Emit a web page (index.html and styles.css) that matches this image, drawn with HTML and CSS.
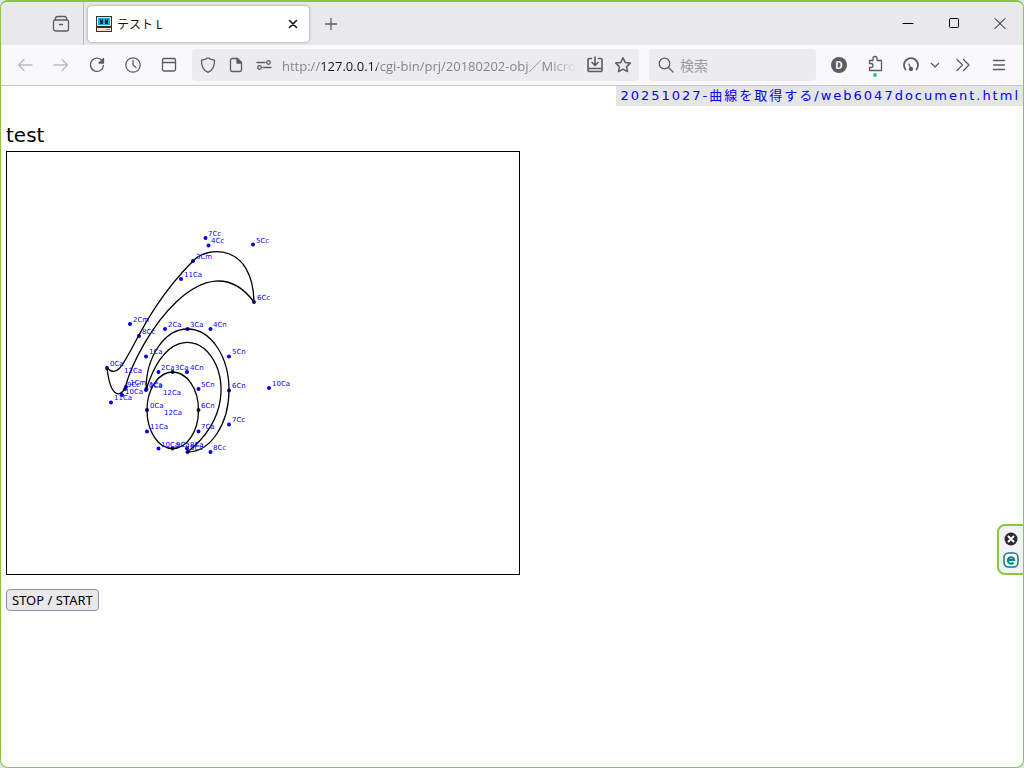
FILE: index.html
```html
<!DOCTYPE html>
<html lang="ja">
<head>
<meta charset="utf-8">
<title>テスト L</title>
<link rel="stylesheet" href="styles.css">
</head>
<body>
<div class="window">
  <header>
    <div class="tabbar">
      <button class="archive" aria-label="Recent browsing"><svg class="icon" viewBox="0 0 18 18"><path d="M3 5Q3.500 1.500 5.500 1.500h7Q14.500 1.500 15 5M3 5h12a1.500 1.500 0 0 1 1.500 1.500v7.500a2 2 0 0 1-2 2h-11a2 2 0 0 1-2-2V6.500A1.500 1.500 0 0 1 3 5zM7.500 9.500h3"/></svg></button>
      <div class="tab">
        <svg class="favicon" viewBox="0 0 16 16"><path fill="#3b3028" d="M0 0h16v16H0z"/><path fill="#f4dfd0" d="M1 1h14v9H1zM1 12h14v3H1z"/><path fill="#12aef0" d="M2 2h12v7H2z"/><path fill="#16253c" d="M4 3h3v5H4zM9 3h3v5H9z"/><path fill="#12aef0" d="M5 3h1v5H5zM10 3h1v5h-1z"/><path fill="#16253c" d="M5 4h1v4H5zM10 4h1v4h-1z"/><path fill="#a78f80" d="M10 13h4v1h-4z"/></svg>
        <span class="tab-title">テスト L</span>
        <button class="tab-close" aria-label="Close tab"><svg class="icon dark" viewBox="0 0 18 18"><path stroke-width="1.6" d="M5.500 5.500l7 7M12.500 5.500l-7 7"/></svg></button>
      </div>
      <button class="newtab" aria-label="New tab"><svg class="icon" viewBox="0 0 18 18"><path d="M9 3.500v11M3.500 9h11"/></svg></button>
      <div class="controls">
        <button aria-label="Minimize"><svg class="icon thin" viewBox="0 0 18 18"><path d="M4 8.500h10"/></svg></button>
        <button aria-label="Maximize"><svg class="icon thin" viewBox="0 0 18 18"><rect x="4.500" y="3.500" width="9" height="9" rx="1"/></svg></button>
        <button aria-label="Close window"><svg class="icon thin" viewBox="0 0 18 18"><path d="M4 3.500l10 10M14 3.500l-10 10"/></svg></button>
      </div>
    </div>
    <div class="toolbar">
      <button class="tool faded" aria-label="Back"><svg class="icon" viewBox="0 0 18 18"><path d="M16 9H2.500M8 3.500L2.500 9 8 14.500"/></svg></button>
      <button class="tool faded" aria-label="Forward"><svg class="icon" viewBox="0 0 18 18"><path d="M2 9h13.500M10 3.500L15.500 9 10 14.500"/></svg></button>
      <button class="tool" aria-label="Reload"><svg class="icon" viewBox="0 0 18 18"><path d="M14.500 5.200A6.600 6.600 0 1 0 15.500 9.500"/><path class="fill" d="M15.500 2.500v4.500H11z"/></svg></button>
      <button class="tool" aria-label="History"><svg class="icon" viewBox="0 0 18 18"><circle cx="9" cy="9" r="7.200"/><path d="M9 4.500V9l3 2.500"/></svg></button>
      <button class="tool" aria-label="Sidebar"><svg class="icon" viewBox="0 0 18 18"><rect x="2.500" y="2.500" width="13" height="12.500" rx="1.500"/><path d="M2.500 6.500h13"/></svg></button>
      <div class="field url">
        <button class="slot" aria-label="Tracking protection"><svg class="icon" viewBox="0 0 18 18"><path d="M9 1.800c2 1.600 4.300 2.200 6.500 2.300.3 5.500-1.500 10-6.500 12.300C4 14.100 2.200 9.600 2.500 4.100 4.700 4 7 3.400 9 1.800z"/></svg></button>
        <button class="slot" aria-label="Site information"><svg class="icon" viewBox="0 0 18 18"><path d="M5 2.500h5.500l4 4v7.500a1.500 1.500 0 0 1-1.500 1.500H5A1.500 1.500 0 0 1 3.500 14V4A1.500 1.500 0 0 1 5 2.500z"/><path class="fill" d="M10 2.500l4.500 4.500H10z"/></svg></button>
        <button class="slot" aria-label="Permissions"><svg class="icon" viewBox="0 0 18 18"><path d="M2 6.500h8M8 11.500h8"/><circle cx="13.500" cy="6.500" r="1.800"/><circle cx="4.500" cy="11.500" r="1.800"/></svg></button>
        <input class="address" type="text" aria-label="Address" value="http://127.0.0.1/cgi-bin/prj/20180202-obj／Microsoft">
        <button class="slot" aria-label="Save page"><svg class="icon" viewBox="0 0 18 18"><path stroke-width="1.600" d="M5.500 2.500h-2a1.500 1.500 0 0 0-1.500 1.500v10a1.500 1.500 0 0 0 1.500 1.500h11a1.500 1.500 0 0 0 1.500-1.500V4a1.500 1.500 0 0 0-1.500-1.500h-2M9 1v8M6 6.500l3 3 3-3M2 12.500h14"/></svg></button>
        <button class="slot" aria-label="Bookmark"><svg class="icon" viewBox="0 0 18 18"><path stroke-width="1.500" d="M9 1.800l2.200 4.600 5.100.7-3.700 3.500.9 5L9 13.200l-4.500 2.400.9-5L1.700 7.100l5.100-.7z"/></svg></button>
      </div>
      <div class="field search">
        <svg class="icon" viewBox="0 0 18 18"><circle cx="7.500" cy="7.500" r="5.300"/><path d="M11.500 11.500l4.500 4.500"/></svg>
        <input class="query" type="text" aria-label="検索" placeholder="検索">
      </div>
      <button class="tool account" aria-label="Account D"><span class="avatar">D</span></button>
      <button class="tool" aria-label="Extensions"><svg class="puzzle" viewBox="0 0 18 24"><path class="line" d="M3.500 7.500h3.500V5.500a2 2 0 0 1 4 0v2h4.500v10h-12v-3H5a2 2 0 0 0 0-4H3.500z"/><circle cx="9" cy="22" r="2" fill="#2ac3a2"/></svg></button>
      <button class="tool" aria-label="Performance"><svg class="icon" viewBox="0 0 18 18"><path stroke-width="1.800" d="M3.500 13.500a7 7 0 1 1 11 0"/><path d="M6.800 8L9 12.500"/><circle class="fill" cx="9" cy="13" r="1.500"/></svg></button>
      <button class="chevron" aria-label="More options"><svg viewBox="0 0 12 12"><path class="line" d="M2 4l4 4 4-4"/></svg></button>
      <button class="tool" aria-label="Overflow"><svg class="icon" viewBox="0 0 18 18"><path d="M3 3.500L8.500 9 3 14.500M9.500 3.500L15 9l-5.500 5.500"/></svg></button>
      <button class="tool" aria-label="Menu"><svg class="icon" viewBox="0 0 18 18"><path d="M3.500 4.500h11M3.500 9h11M3.500 13.500h11"/></svg></button>
    </div>
  </header>
  <main>
    <a class="doc" href="#">20251027-曲線を取得する/web6047document.html</a>
    <h1>test</h1>
    <svg class="plot" width="512" height="422" viewBox="7 152 512 422" role="img" aria-label="Bezier curves">
      <g class="dots">
        <path d="M107 368h0M126 387h0M130 324h0M193 261h0M208.500 245.500h0M253 244.500h0M254 302h0M205.500 238h0M139 336h0M125 389h0M122 395h0M111 402.500h0"/>
        <path d="M146 390h0M146 356.500h0M165 329h0M187.500 329h0M210.500 329h0M229 356.500h0M229 390.500h0M229 424.500h0M210.500 452h0M187.500 452h0M269 388h0M181 279h0"/>
        <path d="M147 410h0M146.500 389h0M158.500 372h0M172.500 372h0M187 372h0M198.500 389h0M198.500 410h0M198.500 431.500h0M187 448.500h0M172.500 448.500h0M158.500 448.500h0M147 431.500h0"/>
      </g>
      <g class="curves">
        <path d="M107 368C126 387 130 324 193 261C208 245 253 244 254 302C206 238 139 336 125 388C122 395 111 402 107 368z"/>
        <path d="M146 390C146 356 165 329 187.500 329C210.500 329 229 356 229 390C229 424 210.500 452 187.500 452C269 388 181 279 146 390z"/>
        <path d="M147 410C147 389 158.500 372 172.500 372C187 372 198.500 389 198.500 410C198.500 431.500 187 448.500 172.500 448.500C158.500 448.500 147 431.500 147 410z"/>
      </g>
      <g class="labels">
        <text x="110" y="366">0Ca</text><text x="130" y="385">1Cm</text><text x="133" y="322">2Cm</text><text x="196" y="259">3Cm</text><text x="211" y="243">4Cc</text><text x="256" y="243">5Cc</text><text x="257" y="300">6Cc</text><text x="208" y="236">7Cc</text><text x="142" y="334">8Cc</text><text x="127" y="387">9Cc</text><text x="125" y="394">10Ca</text><text x="114" y="400">11Ca</text><text x="124" y="373">12Ca</text>
        <text x="149" y="388">0Ca</text><text x="149" y="354">1Ca</text><text x="168" y="327">2Ca</text><text x="190" y="327">3Ca</text><text x="213" y="327">4Cn</text><text x="232" y="354">5Cn</text><text x="232" y="388">6Cn</text><text x="232" y="422">7Cc</text><text x="213" y="450">8Cc</text><text x="190" y="450">9Cc</text><text x="272" y="386">10Ca</text><text x="184" y="277">11Ca</text><text x="163" y="395">12Ca</text>
        <text x="150" y="408">0Ca</text><text x="149" y="387">1Ca</text><text x="161" y="370">2Ca</text><text x="175" y="370">3Ca</text><text x="190" y="370">4Cn</text><text x="201" y="387">5Cn</text><text x="201" y="408">6Cn</text><text x="201" y="429">7Ca</text><text x="190" y="447">8Ca</text><text x="176" y="447">9Ca</text><text x="161" y="447">10Ca</text><text x="150" y="429">11Ca</text><text x="164" y="415">12Ca</text>
      </g>
    </svg>
    <button class="toggle">STOP / START</button>
  </main>
</div>
<aside class="dock">
  <button aria-label="Close panel"><svg viewBox="0 0 16 16"><circle cx="8" cy="8" r="6.500" fill="#272a33"/><path stroke="#fff" stroke-width="2" d="M5 5l6 6M11 5l-6 6"/></svg></button>
  <button aria-label="Open panel"><svg viewBox="0 0 16 16"><rect x="1" y="1" width="14" height="14" rx="4.500" fill="#fff" stroke="#0a8089" stroke-width="1.500"/><path fill="none" stroke="#0a8089" stroke-width="2" d="M5 8h6.200A3.200 3.200 0 1 0 10.500 10.500"/></svg></button>
</aside>
</body>
</html>
```
FILE: styles.css
```css
* { box-sizing: border-box; }
body { margin: 0; background: #d6e4ee; font-family: "DejaVu Sans", "Noto Sans CJK JP", sans-serif; }
button { padding: 0; border: 0; background: none; color: inherit; display: flex; align-items: center; justify-content: center; }
input { min-width: 0; padding: 0; border: 0; outline: 0; background: none; }
svg { display: block; flex: none; }
.window { min-height: 100vh; border: 1px solid #8cc63f; border-top-width: 2px; border-radius: 8px; background: #fff; overflow: hidden; }
.icon { width: 18px; height: 18px; fill: none; stroke: #5b5b66; stroke-width: 1.3; stroke-linecap: round; stroke-linejoin: round; }
.icon .fill { fill: #5b5b66; }
.line { fill: none; stroke: #5b5b66; stroke-width: 1.3; stroke-linejoin: round; }
.dark { stroke: #15141a; }
.thin { stroke: #000; stroke-width: 1; }
.tabbar { display: flex; align-items: center; height: 43px; background: #e9e9eb; }
.archive { width: 83px; height: 43px; padding-left: 37px; border-right: 1px solid #bdbdc0; }
.tab { display: flex; align-items: center; width: 221px; height: 36px; margin-left: 4px; padding: 0 7px 0 8px; background: #fff; border-radius: 4px; box-shadow: 0 0 3px #8e8e98; }
.favicon { width: 16px; height: 16px; }
.tab-title { flex: 1; margin-left: 5px; font: 12px "Noto Sans", "Noto Sans CJK JP", sans-serif; color: #15141a; }
.newtab { width: 36px; height: 36px; margin-left: 4px; }
.controls { display: flex; margin-left: auto; }
.controls button { width: 46px; height: 40px; }
.toolbar { display: flex; align-items: center; height: 41px; padding: 0 6px; background: #f9f9fb; border-bottom: 1px solid #c6c6c9; }
.tool { flex: none; width: 36px; height: 32px; }
.faded { opacity: .4; }
.field { display: flex; align-items: center; height: 32px; border-radius: 4px; background: #ececee; }
.url { flex: 1; min-width: 0; margin-left: 5px; padding: 0 2px; }
.slot { flex: none; width: 28px; height: 32px; }
.address { flex: 1; margin: 0 4px; font: 13px "Open Sans", "Noto Sans CJK JP", sans-serif; color: transparent; background: linear-gradient(to right, #808086 38px, #15141a 38px 95px, #808086 95px calc(100% - 28px), transparent); background-clip: text; -webkit-background-clip: text; }
.search { flex: none; width: 167px; margin: 0 5px 0 10px; padding-left: 8px; }
.query { flex: 1; margin-left: 5px; font: 14px "Noto Sans CJK JP", sans-serif; }
.query::placeholder { color: #9a9a9f; }
.avatar { width: 16px; height: 16px; border-radius: 50%; background: #5b5b66; color: #fff; font: bold 10px/16px "Open Sans", sans-serif; text-align: center; }
.puzzle { width: 18px; height: 24px; }
.chevron { flex: none; width: 12px; height: 32px; margin-right: 4px; }
.chevron svg { width: 12px; height: 12px; }
main { display: flex; flex-direction: column; align-items: flex-start; padding: 0 0 0 5px; }
.doc { align-self: flex-end; padding: 0 3px 0 4px; background: #e5e5e5; color: #00f; font-size: 13px; line-height: 20px; letter-spacing: 2px; text-decoration: none; }
h1 { margin: 17px 0 3px; font-size: 20px; line-height: 25px; font-weight: normal; }
.plot { border: 1px solid #000; box-sizing: content-box; }
.dots { stroke: #00e; stroke-width: 4; stroke-linecap: round; }
.curves { fill: none; stroke: #000; stroke-width: 1.3; }
.labels { fill: #00f; font-size: 7px; }
.toggle { height: 22px; margin-top: 14px; padding: 0 5px; border: 1px solid #8f8f9d; border-radius: 4px; background: #e9e9ed; color: #000; font: 13px "Noto Sans", sans-serif; }
.dock { position: fixed; right: 0; top: 524px; display: flex; flex-direction: column; gap: 5px; padding: 5px 4px; border: 2px solid #8cc63f; border-right-width: 1px; border-radius: 8px 0 0 8px; background: #f2f2f4; }
.dock svg { width: 16px; height: 16px; }
```
